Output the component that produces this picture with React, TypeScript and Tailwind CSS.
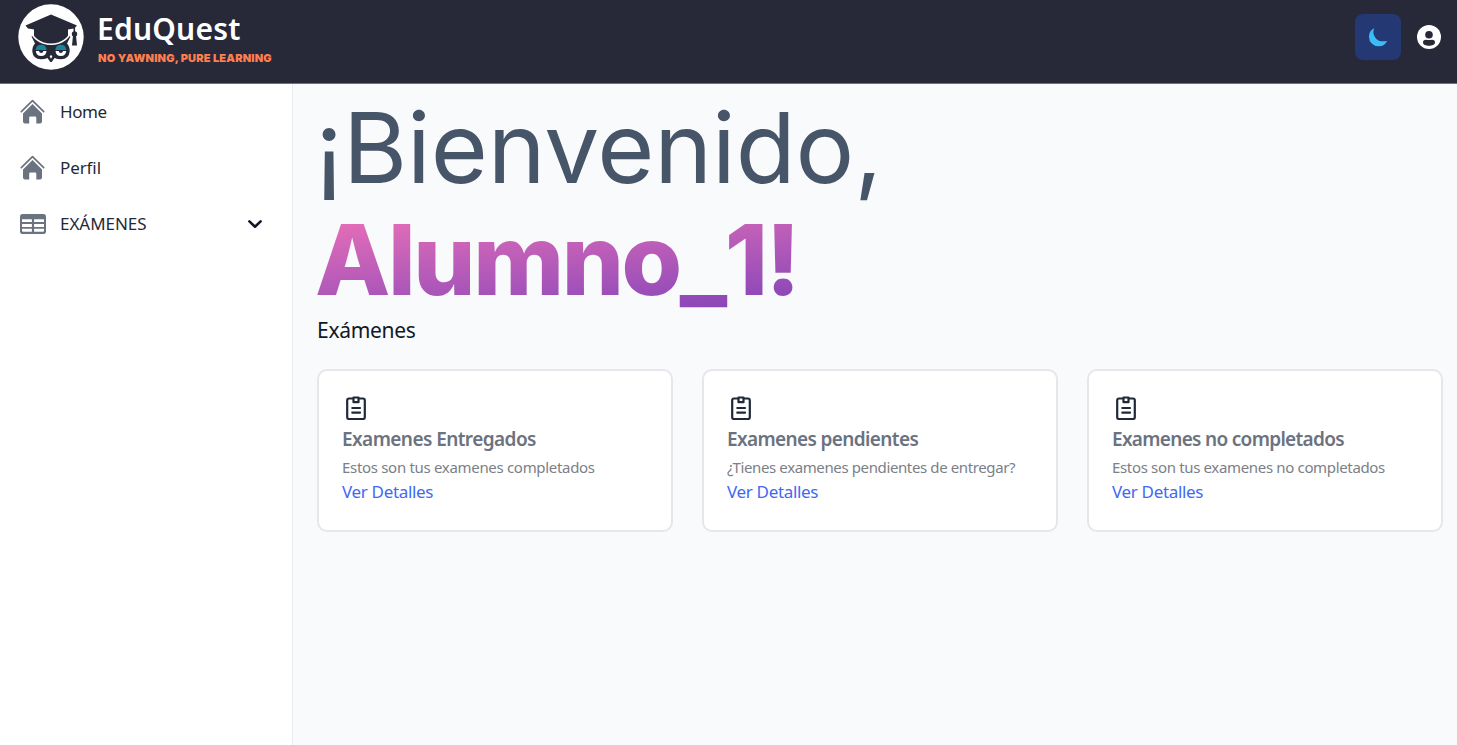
import React from "react";

const body = "font-['Noto_Sans','Open_Sans',sans-serif]";

function OwlLogo() {
  return (
    <svg viewBox="0 0 66 66" className="size-[66px] shrink-0">
      <circle cx="33" cy="33" r="32.7" fill="#fff" />
      <path
        d="M13.500 32.500 17 39.500Q14 43 14.300 47.500 15 55 23 55.300q3.700 0 6.500-1.300L32.300 58h1.400l2.800-4q2.800 1.300 6.500 1.300 8-.3 8.700-7.800.3-4.500-2.700-8L52.500 32.500l-5-2h-29z"
        fill="#272838"
      />
      <path d="M16 22v10q17 14 34 0V22z" fill="#272838" />
      <path d="M14.500 31Q18 36.500 25 39q8 2.600 16 0 7-2.500 10.500-8" fill="none" stroke="#fff" strokeWidth="1.400" />
      <path d="M7.500 21.500 33 10.500l26 11-3 3-9.500 1.500q-6.500 1-13.500 4-7-3-13.500-4L10 24.500z" fill="#272838" />
      <path d="M56.300 22v8" stroke="#272838" strokeWidth="1.600" />
      <circle cx="56.500" cy="30" r="2.700" fill="#272838" />
      <path d="M55 31.500h3l1 10h-5z" fill="#272838" />
      <path d="M17.600 46q.6-5.200 5.600-5.200 4.900 0 5.500 5.200zM37.300 46q.6-5.200 5.500-5.200 5 0 5.600 5.200z" fill="#17859a" />
      <path d="M17.800 47h10.700q-.3 5-5.300 5t-5.400-5zM37.500 47h10.700q-.4 5-5.400 5t-5.300-5z" fill="#fff" />
      <path d="M21 47h4.400q-.2 2-2.200 2T21 47zM40.600 47H45q-.2 2-2.200 2t-2.200-2z" fill="#272838" />
      <path d="M33 50.800l1.300 1.800-1.300 2.200-1.300-2.200z" fill="#fff" />
    </svg>
  );
}

function MoonIcon() {
  return (
    <svg viewBox="0 0 20 20" className="-ml-px size-5">
      <path d="M6.300 1.200A9.300 9.300 0 0 0 1 10a9.300 9.300 0 0 0 9.300 9.300 9.300 9.300 0 0 0 8.900-5.600 9.300 9.300 0 0 1-3.500.6A9.300 9.300 0 0 1 6.300 1.200z" fill="#38bdf8" />
    </svg>
  );
}

function UserIcon() {
  return (
    <svg viewBox="0 0 24 24" className="size-6">
      <circle cx="12" cy="12" r="12" fill="#fff" />
      <circle cx="12" cy="9.700" r="3.800" fill="#272838" />
      <path d="M6 17.500q0-2.800 3-2.800 3 .8 6 0 3 0 3 2.800c0 2.200-3 3.200-6 3.200s-6-1-6-3.200z" fill="#272838" />
    </svg>
  );
}

function HomeIcon() {
  return (
    <svg viewBox="0 0 26 26" className="size-[26px] shrink-0">
      <path d="m1.300 12.700 11.200-11 11.200 11" fill="none" stroke="#6b7280" strokeWidth="1.700" strokeLinecap="round" strokeLinejoin="round" />
      <path d="M12.500 5 22 14.500v8q0 2-2 2h-3.700v-5.800q0-1.200-1.200-1.200H10.400q-1.200 0-1.200 1.200v5.800H5q-2 0-2-2v-8z" fill="#6b7280" />
    </svg>
  );
}

function TableIcon() {
  return (
    <svg viewBox="0 0 26 20" className="h-5 w-[26px] shrink-0">
      <rect width="26" height="20" rx="2.800" fill="#6b7280" />
      <path d="M2 5.200h9.900v2.900H2zM14.100 5.200H24v2.900h-9.900zM2 10h9.900v2.900H2zM14.100 10H24v2.900h-9.900zM2 14.800h9.900v2.900H3q-1 0-1-1zM14.100 14.800H24v1.900q0 1-1 1h-8.900z" fill="#fff" />
    </svg>
  );
}

function ChevronIcon() {
  return (
    <svg viewBox="0 0 16 10" className="h-[10px] w-4 shrink-0">
      <path d="m2.400 2.400 5.600 5.300 5.600-5.300" fill="none" stroke="#111827" strokeWidth="2.600" strokeLinecap="round" strokeLinejoin="round" />
    </svg>
  );
}

function ClipboardIcon() {
  return (
    <svg viewBox="0 0 20 24" className="h-6 w-5" fill="none" stroke="#1f2937" strokeWidth="2.200" strokeLinejoin="round" strokeLinecap="round">
      <path d="M6.500 2.500H3Q1.200 2.500 1.200 4.300v16.900Q1.200 23 3 23h14q1.800 0 1.800-1.800V4.300q0-1.800-1.800-1.800H13.500" />
      <path d="M7.500 1.500h5v4.700h-5z" />
      <path d="M6.300 12h7.700M6.300 16.700h7.700" />
    </svg>
  );
}

const nav = [
  { label: "Home", icon: <HomeIcon />, track: "tracking-[-0.4px]" },
  { label: "Perfil", icon: <HomeIcon />, track: "tracking-[-0.1px]" },
  { label: "EXÁMENES", icon: <TableIcon />, track: "tracking-[-0.05px]", open: true },
];

const cards = [
  { title: "Examenes Entregados", text: "Estos son tus examenes completados", titleTrack: "tracking-[-0.57px]", textTrack: "tracking-[-0.31px]" },
  { title: "Examenes pendientes", text: "¿Tienes examenes pendientes de entregar?", titleTrack: "tracking-[-0.63px]", textTrack: "tracking-[-0.38px]" },
  { title: "Examenes no completados", text: "Estos son tus examenes no completados", titleTrack: "tracking-[-0.69px]", textTrack: "tracking-[-0.34px]" },
];

export default function App() {
  return (
    <div className={`flex h-[745px] flex-col overflow-hidden bg-[#f9fafc] ${body}`}>
      <header className="flex h-[84px] shrink-0 items-start justify-between border-b border-[#6b7280] bg-[#272838] pr-4 pl-[18px]">
        <div className="flex gap-[14px] pt-1">
          <OwlLogo />
          <div className="flex flex-col pt-[7px]">
            <span className="-ml-px text-[30px] leading-9 font-semibold tracking-[0.2px] whitespace-nowrap text-white">EduQuest</span>
            <span className="pt-[3px] font-['Inter',sans-serif] text-[11px] leading-4 font-black tracking-[0.17px] whitespace-nowrap text-[#ff7f50]">NO YAWNING, PURE LEARNING</span>
          </div>
        </div>
        <div className="flex items-center gap-4 pt-[14px]">
          <button className="flex size-[46px] items-center justify-center rounded-lg bg-[#243873]">
            <MoonIcon />
          </button>
          <UserIcon />
        </div>
      </header>

      <div className="flex min-h-0 flex-1">
        <aside className="flex w-[293px] shrink-0 flex-col border-r border-[#e9ebf0] bg-white">
          {nav.map((item) => (
            <a key={item.label} className="flex h-14 items-center pr-[29px] pl-5">
              {item.icon}
              <span className={`ml-[14px] flex-1 text-[17px] leading-6 text-[#1f2937] ${item.track}`}>{item.label}</span>
              {item.open && <ChevronIcon />}
            </a>
          ))}
        </aside>

        <main className="flex min-w-0 flex-1 flex-col pt-2 pr-[14px] pl-6">
          <h1 className="font-['Inter',sans-serif] text-[98px] leading-[112px] whitespace-nowrap text-[#475569]">
            <span className="-ml-[2px] block tracking-[-0.1px]">¡Bienvenido,</span>
            <span className="-ml-[2px] block bg-gradient-to-br from-[#f472b6] to-[#581cb5] bg-clip-text font-extrabold tracking-[-2.4px] text-transparent">
              Alumno<span className="tracking-[-2.6px]">_</span>1!
            </span>
          </h1>
          <h2 className="-mt-[2px] text-[21px] leading-8 tracking-[-0.3px] text-[#111827]">Exámenes</h2>
          <section className="mt-[23px] grid grid-cols-3 gap-[29px]">
            {cards.map((card) => (
              <article key={card.title} className="flex h-[163px] flex-col items-start rounded-[10px] border-2 border-[#e5e7eb] bg-white pt-[25px] pl-[23px]">
                <div className="pl-1">
                  <ClipboardIcon />
                </div>
                <h3 className={`mt-[3px] text-[19px] leading-8 font-semibold whitespace-nowrap text-[#6b7280] ${card.titleTrack}`}>{card.title}</h3>
                <p className={`text-[15px] leading-6 whitespace-nowrap text-[#7b8087] ${card.textTrack}`}>{card.text}</p>
                <a className="text-[17px] leading-[26px] tracking-[-0.33px] text-[#3f68f5]">Ver Detalles</a>
              </article>
            ))}
          </section>
        </main>
      </div>
    </div>
  );
}
